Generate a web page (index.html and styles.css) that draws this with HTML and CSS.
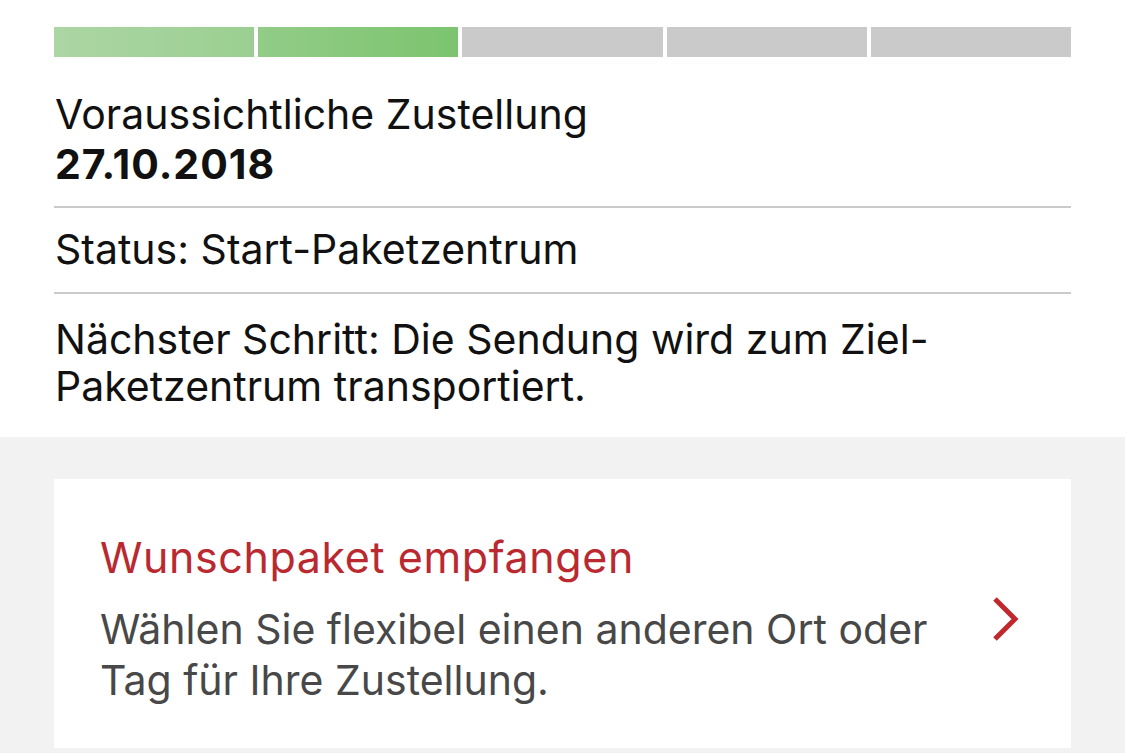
FILE: index.html
```html
<!DOCTYPE html>
<html lang="de">
<head>
    <title>Sendungsverfolgung</title>
    <meta name="viewport" content="width=device-width, initial-scale=1.0" />
    <link rel="stylesheet" href="styles.css">
</head>

<body>
    <div class="tracking">
        <ul class="progress">
            <li class="step done first"></li>
            <li class="step done second"></li>
            <li class="step"></li>
            <li class="step"></li>
            <li class="step"></li>
        </ul>

        <div class="row row-date">
            <p>Voraussichtliche Zustellung</p>
            <p class="date">27.10.2018</p>
        </div>
        <div class="row row-status">
            <p>Status: Start-Paketzentrum</p>
        </div>
        <div class="row row-next">
            <p>Nächster Schritt: Die Sendung wird zum Ziel-<br>Paketzentrum transportiert.</p>
        </div>
    </div>

    <div class="options">
        <a class="card" href="#">
            <div class="card-text">
                <h3>Wunschpaket empfangen</h3>
                <p>Wählen Sie flexibel einen anderen Ort oder<br>Tag für Ihre Zustellung.</p>
            </div>
            <svg class="chevron" width="30" height="46" viewBox="0 0 30 46">
                <polyline points="5,3 25,23 5,43" fill="none" stroke="#c0282e" stroke-width="5" />
            </svg>
        </a>
    </div>
</body>

</html>
```

FILE: styles.css
```css
* {
    box-sizing: border-box;
}

body {
    margin: 0;
    background: #f2f2f2;
    font-family: Inter, "Noto Sans", sans-serif;
    color: #111;
}

p {
    margin: 0;
}

.tracking {
    background: white;
    padding: 27px 54px 0 54px;
}

.progress {
    display: flex;
    gap: 4px;
    list-style: none;
    margin: 0;
    padding: 0;
}

.step {
    flex: 1;
    height: 30px;
    background: #cacaca;
}

.step.first {
    background: linear-gradient(to right, #acd6a4, #9bcf91);
}

.step.second {
    background: linear-gradient(to right, #92cc87, #7cc46f);
}

.row {
    font-size: 41px;
    line-height: 48px;
}

.row-date {
    padding: 32px 0 17px 1px;
    line-height: 50px;
    border-bottom: 2px solid #cacaca;
}

.date {
    font-weight: 700;
    letter-spacing: 1px;
}

.row-status {
    padding: 17px 0 19px 1px;
    border-bottom: 2px solid #cacaca;
}

.row-next {
    padding: 22px 0 27px 1px;
    line-height: 47px;
}

.options {
    padding: 42px 54px 5px 54px;
}

.card {
    display: flex;
    align-items: center;
    justify-content: space-between;
    background: white;
    padding: 53px 51px 42px 46px;
    text-decoration: none;
}

.card h3 {
    margin: 0 0 22px 0;
    font-size: 43px;
    line-height: 50px;
    font-weight: 400;
    color: #b9292f;
    letter-spacing: 0.6px;
}

.card p {
    font-size: 41px;
    line-height: 51px;
    color: #484848;
}

.chevron {
    flex-shrink: 0;
}
```
